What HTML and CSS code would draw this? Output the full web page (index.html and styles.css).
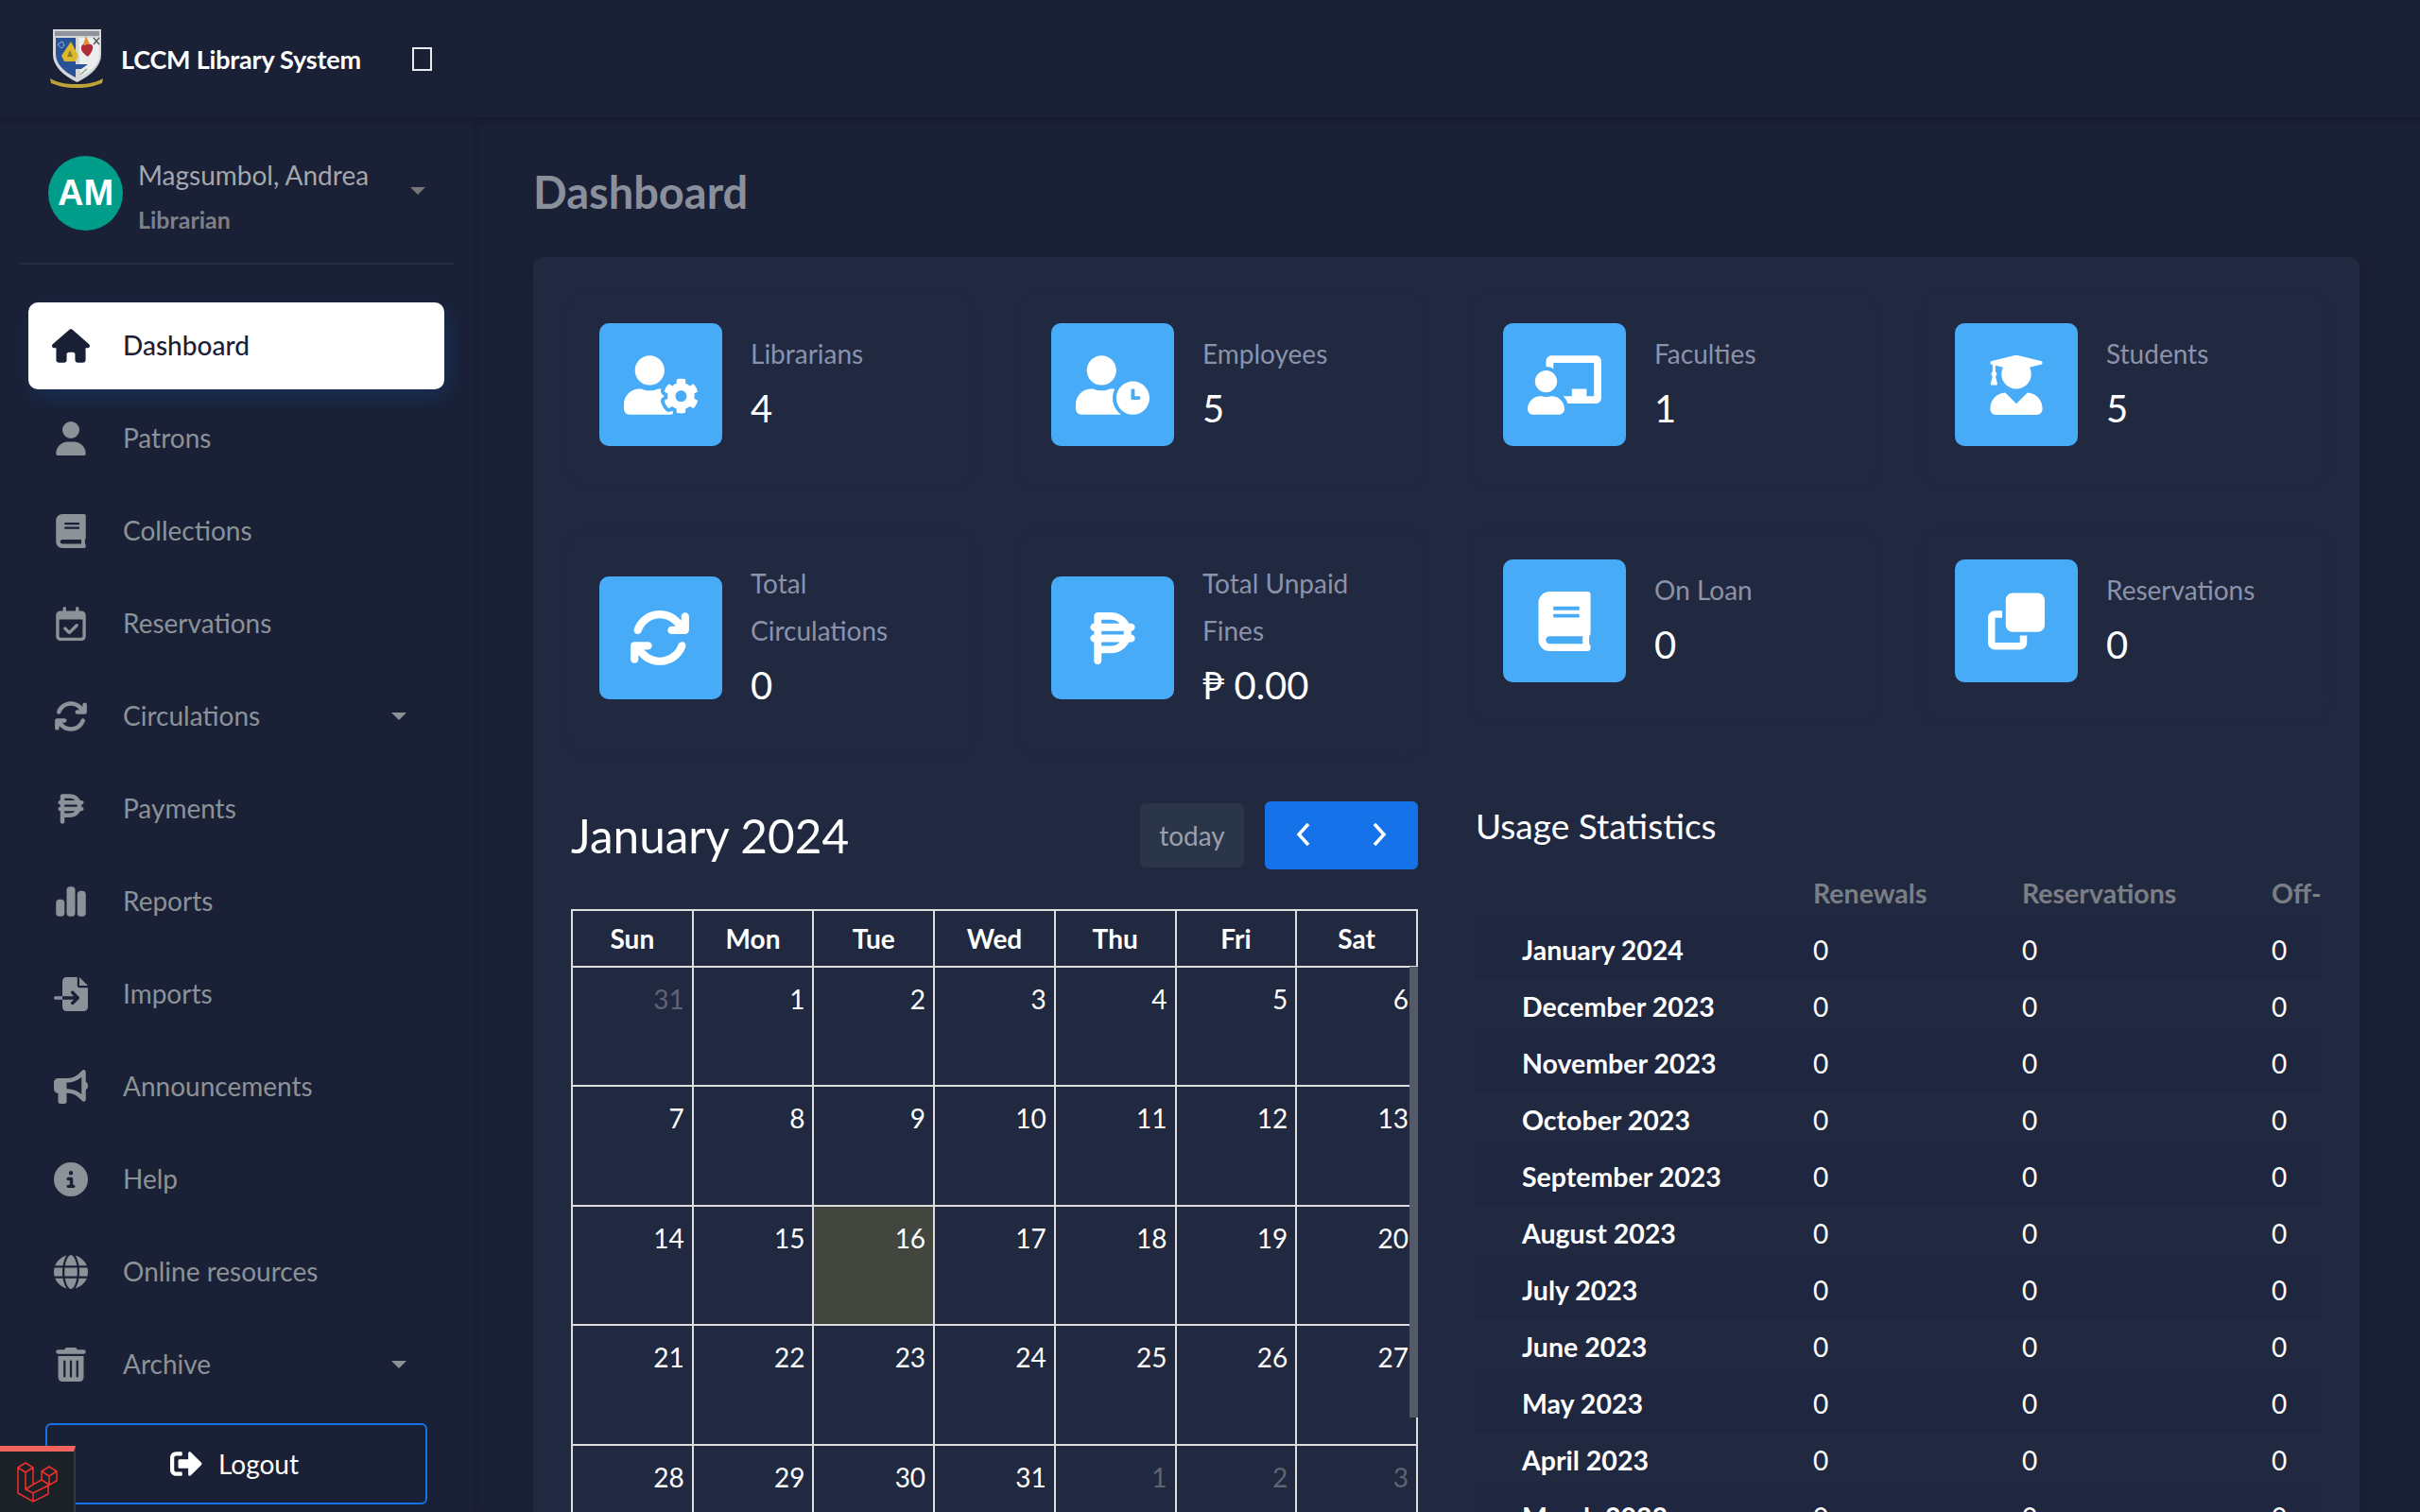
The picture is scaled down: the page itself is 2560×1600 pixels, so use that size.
FILE: index.html
```html
<!DOCTYPE html>
<html lang="en">
<head>
    <meta charset="UTF-8">
    <meta name="viewport" content="width=device-width, initial-scale=1.0">
    <title>LCCM Library System</title>
    <link rel="stylesheet" href="styles.css">
</head>
<body>

<!-- icon sprite -->
<svg class="sprite" xmlns="http://www.w3.org/2000/svg">
    <symbol id="i-home" viewBox="0 0 576 512"><path d="M575.8 255.5c0 18-15 32.1-32 32.1h-32l.7 160.2c0 2.7-.2 5.4-.5 8.1V472c0 22.1-17.9 40-40 40H456c-1.1 0-2.2 0-3.3-.1c-1.4 .1-2.8 .1-4.2 .1H416 392c-22.1 0-40-17.9-40-40V448 384c0-17.7-14.3-32-32-32H256c-17.7 0-32 14.3-32 32v64 24c0 22.1-17.9 40-40 40H160 128.1c-1.5 0-3-.1-4.5-.2c-1.2 .1-2.4 .2-3.6 .2H104c-22.1 0-40-17.9-40-40V360c0-.9 0-1.9 .1-2.8V287.6H32c-18 0-32-14-32-32.1c0-9 3-17 10-24L266.4 8c7-7 15-8 22-8s15 2 21 7L564.8 231.5c8 7 12 15 11 24z"/></symbol>
    <symbol id="i-user" viewBox="0 0 448 512"><path d="M224 256A128 128 0 1 0 224 0a128 128 0 1 0 0 256zm-45.7 48C79.8 304 0 383.8 0 482.3C0 498.7 13.3 512 29.7 512H418.3c16.4 0 29.7-13.3 29.7-29.7C448 383.8 368.2 304 269.7 304H178.3z"/></symbol>
    <symbol id="i-book" viewBox="0 0 448 512"><path d="M448 360V24c0-13.3-10.7-24-24-24H96C43 0 0 43 0 96v320c0 53 43 96 96 96h328c13.3 0 24-10.7 24-24v-16c0-7.5-3.5-14.3-8.9-18.7-4.2-15.4-4.2-59.3 0-74.7 5.4-4.3 8.9-11.1 8.9-18.6zM128 134c0-3.3 2.7-6 6-6h212c3.3 0 6 2.7 6 6v20c0 3.3-2.7 6-6 6H134c-3.3 0-6-2.7-6-6v-20zm0 64c0-3.3 2.7-6 6-6h212c3.3 0 6 2.7 6 6v20c0 3.3-2.7 6-6 6H134c-3.3 0-6-2.7-6-6v-20zm253.4 250H96c-17.7 0-32-14.3-32-32 0-17.6 14.4-32 32-32h285.4c-1.9 17.1-1.9 46.9 0 64z"/></symbol>
    <symbol id="i-calendar" viewBox="0 0 448 512"><path d="M128 0c13.3 0 24 10.7 24 24V64H296V24c0-13.3 10.7-24 24-24s24 10.7 24 24V64h40c35.3 0 64 28.7 64 64v16 48V448c0 35.3-28.7 64-64 64H64c-35.3 0-64-28.7-64-64V192 144 128C0 92.7 28.7 64 64 64h40V24c0-13.3 10.7-24 24-24zM400 192H48V448c0 8.8 7.2 16 16 16H384c8.8 0 16-7.2 16-16V192zM329 297L217 409c-9.4 9.4-24.6 9.4-33.9 0l-64-64c-9.4-9.4-9.4-24.6 0-33.9s24.6-9.4 33.9 0l47 47 95-95c9.4-9.4 24.6-9.4 33.9 0s9.4 24.6 0 33.9z"/></symbol>
    <symbol id="i-sync" viewBox="0 0 512 512"><path d="M105.1 202.6c7.7-21.8 20.2-42.3 37.8-59.8c62.5-62.5 163.8-62.5 226.3 0L386.3 160H352c-17.7 0-32 14.3-32 32s14.3 32 32 32H463.5c0 0 0 0 0 0h.4c17.7 0 32-14.3 32-32V80c0-17.7-14.3-32-32-32s-32 14.3-32 32v35.2L414.4 97.6c-87.5-87.5-229.3-87.5-316.8 0C73.2 122 55.6 150.7 44.8 181.4c-5.9 16.7 2.9 34.9 19.5 40.8s34.9-2.9 40.8-19.5zM39 289.3c-5 1.5-9.8 4.2-13.7 8.2c-4 4-6.7 8.8-8.1 14c-.3 1.2-.6 2.5-.8 3.8c-.3 1.7-.4 3.4-.4 5.1V432c0 17.7 14.3 32 32 32s32-14.3 32-32V396.9l17.6 17.5 0 0c87.5 87.4 229.3 87.4 316.7 0c24.4-24.4 42.1-53.1 52.9-83.7c5.9-16.7-2.9-34.9-19.5-40.8s-34.9 2.9-40.8 19.5c-7.7 21.8-20.2 42.3-37.8 59.8c-62.5 62.5-163.8 62.5-226.3 0l-.1-.1L125.6 352H160c17.7 0 32-14.3 32-32s-14.3-32-32-32H48.4c-1.6 0-3.2 .1-4.8 .3s-3.1 .5-4.6 1z"/></symbol>
    <symbol id="i-peso" viewBox="0 0 384 512"><path d="M64 32C46.3 32 32 46.3 32 64v64c-17.7 0-32 14.3-32 32s14.3 32 32 32l0 32c-17.7 0-32 14.3-32 32s14.3 32 32 32l0 64v96c0 17.7 14.3 32 32 32s32-14.3 32-32V384h80c68.4 0 127.7-39 156.8-96H352c17.7 0 32-14.3 32-32s-14.3-32-32-32h-.7c.5-5.3 .7-10.6 .7-16s-.2-10.7-.7-16h.7c17.7 0 32-14.3 32-32s-14.3-32-32-32H332.8C303.7 71 244.4 32 176 32H64zm190.4 96H96V96h80c30.5 0 58.2 12.2 78.4 32zM96 192H286.9c.7 5.2 1.1 10.6 1.1 16s-.4 10.8-1.1 16H96V192zm158.4 96c-20.2 19.8-47.9 32-78.4 32H96V288H254.4z"/></symbol>
    <symbol id="i-chart" viewBox="0 0 448 512"><path d="M160 80c0-26.5 21.5-48 48-48h32c26.5 0 48 21.5 48 48V432c0 26.5-21.5 48-48 48H208c-26.5 0-48-21.5-48-48V80zM0 272c0-26.5 21.5-48 48-48H80c26.5 0 48 21.5 48 48V432c0 26.5-21.5 48-48 48H48c-26.5 0-48-21.5-48-48V272zM368 96h32c26.5 0 48 21.5 48 48V432c0 26.5-21.5 48-48 48H368c-26.5 0-48-21.5-48-48V144c0-26.5 21.5-48 48-48z"/></symbol>
    <symbol id="i-import" viewBox="0 0 512 512"><path d="M128 64c0-35.3 28.7-64 64-64H352V128c0 17.7 14.3 32 32 32H512V448c0 35.3-28.7 64-64 64H192c-35.3 0-64-28.7-64-64V336H302.1l-39 39c-9.4 9.4-9.4 24.6 0 33.9s24.6 9.4 33.9 0l80-80c9.4-9.4 9.4-24.6 0-33.9l-80-80c-9.4-9.4-24.6-9.4-33.9 0s-9.4 24.6 0 33.9l39 39H128V64zm0 224v48H24c-13.3 0-24-10.7-24-24s10.7-24 24-24H128zM512 128H384V0L512 128z"/></symbol>
    <symbol id="i-bullhorn" viewBox="0 0 512 512"><path d="M480 32c0-12.9-7.8-24.6-19.8-29.6s-25.7-2.2-34.9 6.9L381.7 53c-48 48-113.1 75-181 75H192 160 64c-35.3 0-64 28.7-64 64v96c0 35.3 28.7 64 64 64l0 128c0 17.7 14.3 32 32 32h64c17.7 0 32-14.3 32-32V352h8.7c67.9 0 133 27 181 75l43.6 43.6c9.2 9.2 22.9 11.9 34.9 6.9s19.8-16.6 19.8-29.6V300.4c18.6-8.8 32-32.5 32-60.4s-13.4-51.6-32-60.4V32zm-64 76.7V240 371.3C357.2 317.8 280.5 288 200.7 288H192V192h8.7c79.8 0 156.5-29.8 215.3-83.3z"/></symbol>
    <symbol id="i-info" viewBox="0 0 512 512"><path d="M256 512A256 256 0 1 0 256 0a256 256 0 1 0 0 512zM216 336h24V272H216c-13.3 0-24-10.7-24-24s10.7-24 24-24h48c13.3 0 24 10.7 24 24v88h8c13.3 0 24 10.7 24 24s-10.7 24-24 24H216c-13.3 0-24-10.7-24-24s10.7-24 24-24zm40-208a32 32 0 1 1 0 64 32 32 0 1 1 0-64z"/></symbol>
    <symbol id="i-globe" viewBox="0 0 512 512"><path d="M352 256c0 22.2-1.2 43.6-3.3 64H163.3c-2.2-20.4-3.3-41.8-3.3-64s1.2-43.6 3.3-64H348.7c2.2 20.4 3.3 41.8 3.3 64zm28.8-64H503.9c5.3 20.5 8.1 41.9 8.1 64s-2.8 43.5-8.1 64H380.8c2.1-20.6 3.2-42 3.2-64s-1.1-43.4-3.2-64zm112.6-32H376.7c-10-63.9-29.8-117.4-55.3-151.6c78.3 20.7 142 77.5 172.9 151.6zm-149.1 0H167.7c6.1-36.4 15.5-68.6 27-94.7c10.5-23.6 22.2-40.7 33.5-51.5C239.4 3.2 248.7 0 256 0s16.6 3.2 27.8 13.8c11.3 10.8 23 27.9 33.5 51.5c11.6 26 20.9 58.2 27 94.7zm-209 0H18.6C49.6 85.9 113.2 29.1 191.6 8.4C166.1 42.6 146.3 96.1 136.3 160zM8.1 192H131.2c-2.1 20.6-3.2 42-3.2 64s1.1 43.4 3.2 64H8.1C2.8 299.5 0 278.1 0 256s2.8-43.5 8.1-64zM194.7 446.6c-11.6-26-20.9-58.2-27-94.6H344.3c-6.1 36.4-15.5 68.6-27 94.6c-10.5 23.6-22.2 40.7-33.5 51.5C272.6 508.8 263.3 512 256 512s-16.6-3.2-27.8-13.8c-11.3-10.8-23-27.9-33.5-51.5zM136.3 352c10 63.9 29.8 117.4 55.3 151.6C113.2 482.9 49.6 426.1 18.6 352H136.3zm358.1 0c-30.9 74.1-94.6 130.9-172.9 151.6c25.5-34.2 45.2-87.7 55.3-151.6H493.4z"/></symbol>
    <symbol id="i-trash" viewBox="0 0 448 512"><path d="M135.2 17.7C140.6 6.8 151.7 0 163.8 0H284.2c12.1 0 23.2 6.8 28.6 17.7L320 32h96c17.7 0 32 14.3 32 32s-14.3 32-32 32H32C14.3 96 0 81.7 0 64S14.3 32 32 32h96l7.2-14.3zM32 128H416V448c0 35.3-28.7 64-64 64H96c-35.3 0-64-28.7-64-64V128zm96 64c-8.8 0-16 7.2-16 16V432c0 8.8 7.2 16 16 16s16-7.2 16-16V208c0-8.8-7.2-16-16-16zm96 0c-8.8 0-16 7.2-16 16V432c0 8.8 7.2 16 16 16s16-7.2 16-16V208c0-8.8-7.2-16-16-16zm96 0c-8.8 0-16 7.2-16 16V432c0 8.8 7.2 16 16 16s16-7.2 16-16V208c0-8.8-7.2-16-16-16z"/></symbol>
    <symbol id="i-logout" viewBox="0 0 512 512"><path d="M497 273L329 441c-15 15-41 4.5-41-17v-96H152c-13.3 0-24-10.7-24-24v-96c0-13.3 10.7-24 24-24h136V88c0-21.4 25.9-32 41-17l168 168c9.3 9.4 9.3 24.6 0 34zM192 436v-40c0-6.6-5.4-12-12-12H96c-17.7 0-32-14.3-32-32V160c0-17.7 14.3-32 32-32h84c6.6 0 12-5.4 12-12V76c0-6.6-5.4-12-12-12H96c-53 0-96 43-96 96v192c0 53 43 96 96 96h84c6.6 0 12-5.4 12-12z"/></symbol>
    <symbol id="i-user-cog" viewBox="0 0 640 512"><path d="M610.5 373.3c2.6-14.1 2.6-28.5 0-42.6l25.8-14.9c3-1.7 4.3-5.2 3.3-8.5-6.7-21.6-18.2-41.2-33.2-57.4-2.3-2.5-6-3.1-9-1.4l-25.8 14.9c-10.9-9.3-23.4-16.5-36.9-21.3v-29.8c0-3.4-2.4-6.4-5.7-7.1-22.3-5-45-4.8-66.2 0-3.3.7-5.7 3.7-5.7 7.1v29.8c-13.5 4.8-26 12-36.9 21.3l-25.8-14.9c-2.9-1.7-6.7-1.1-9 1.4-15 16.2-26.5 35.8-33.2 57.4-1 3.3.4 6.8 3.3 8.5l25.8 14.9c-2.6 14.1-2.6 28.5 0 42.6l-25.8 14.9c-3 1.7-4.3 5.2-3.3 8.5 6.7 21.6 18.2 41.1 33.2 57.4 2.3 2.5 6 3.1 9 1.4l25.8-14.9c10.9 9.3 23.4 16.5 36.9 21.3v29.8c0 3.4 2.4 6.4 5.7 7.1 22.3 5 45 4.8 66.2 0 3.3-.7 5.7-3.7 5.7-7.1v-29.8c13.5-4.8 26-12 36.9-21.3l25.8 14.9c2.9 1.7 6.7 1.1 9-1.4 15-16.2 26.5-35.8 33.2-57.4 1-3.3-.4-6.8-3.3-8.5l-25.8-14.9zM496 400.5c-26.8 0-48.5-21.8-48.5-48.5s21.8-48.5 48.5-48.5 48.5 21.8 48.5 48.5-21.7 48.5-48.5 48.5zM224 256c70.7 0 128-57.3 128-128S294.7 0 224 0 96 57.3 96 128s57.3 128 128 128zm201.2 226.5c-2.3-1.2-4.6-2.6-6.8-3.9l-7.9 4.6c-6 3.4-12.8 5.3-19.6 5.3-10.9 0-21.4-4.6-28.9-12.6-18.3-19.8-32.3-43.9-40.2-69.6-5.5-17.7 1.9-36.4 17.9-45.7l7.9-4.6c-.1-2.6-.1-5.2 0-7.8l-7.9-4.6c-16-9.2-23.4-28-17.9-45.7.9-2.9 2.2-5.8 3.2-8.7-3.8-.3-7.5-1.2-11.4-1.2h-16.7c-22.2 10.2-46.9 16-72.9 16s-50.6-5.8-72.9-16h-16.7C60.2 288 0 348.2 0 422.4V464c0 26.5 21.5 48 48 48h352c10.1 0 19.5-3.2 27.2-8.5-1.2-3.8-2-7.7-2-11.8v-9.2z"/></symbol>
    <symbol id="i-user-clock" viewBox="0 0 640 512"><path d="M496 224c-79.6 0-144 64.4-144 144s64.4 144 144 144 144-64.4 144-144-64.4-144-144-144zm64 150.3c0 5.3-4.4 9.7-9.7 9.7h-60.6c-5.3 0-9.7-4.4-9.7-9.7v-76.6c0-5.3 4.4-9.7 9.7-9.7h12.6c5.3 0 9.7 4.4 9.7 9.7V352h38.3c5.3 0 9.7 4.4 9.7 9.7v12.6zM320 368c0-27.8 6.7-54.1 18.2-77.5-8-1.5-16.2-2.5-24.6-2.5h-16.7c-22.2 10.2-46.9 16-72.9 16s-50.6-5.8-72.9-16h-16.7C60.2 288 0 348.2 0 422.4V464c0 26.5 21.5 48 48 48h347.1c-45.3-31.9-75.1-84.5-75.1-144zm-96-112c70.7 0 128-57.3 128-128S294.7 0 224 0 96 57.3 96 128s57.3 128 128 128z"/></symbol>
    <symbol id="i-teacher" viewBox="0 0 640 512"><path d="M208 352c-2.39 0-4.78.35-7.06 1.09C187.98 357.3 174.35 360 160 360c-14.35 0-27.98-2.7-40.95-6.91-2.28-.74-4.66-1.09-7.05-1.09C49.94 352-.33 402.48 0 464.62.14 490.88 21.73 512 48 512h224c26.27 0 47.86-21.12 48-47.38.33-62.14-49.94-112.62-112-112.62zm-48-32c53.02 0 96-42.98 96-96s-42.98-96-96-96-96 42.98-96 96 42.98 96 96 96zM592 0H208c-26.47 0-48 22.25-48 49.59V96c23.42 0 45.1 6.78 64 17.8V64h352v288h-64v-64H384v64h-76.24c19.1 16.69 33.12 38.73 39.69 64H592c26.47 0 48-22.25 48-49.59V49.59C640 22.25 618.47 0 592 0z"/></symbol>
    <symbol id="i-graduate" viewBox="0 0 448 512"><path d="M319.4 320.6L224 416l-95.4-95.4C57.1 323.7 0 382.2 0 454.4v9.6c0 26.5 21.5 48 48 48h352c26.5 0 48-21.5 48-48v-9.6c0-72.2-57.1-130.7-128.6-133.8zM13.6 79.8l6.4 1.5v58.4c-7 4.2-12 11.5-12 20.3 0 8.4 4.6 15.4 11.1 19.7L3.5 242c-1.7 6.9 2.1 14 7.6 14h41.8c5.5 0 9.3-7.1 7.6-14l-15.6-62.3C51.4 175.4 56 168.4 56 160c0-8.8-5-16.1-12-20.3V87.1l66 15.9c-8.6 17.2-14 36.4-14 57 0 70.7 57.3 128 128 128s128-57.3 128-128c0-20.6-5.3-39.8-14-57l96.3-23.2c18.2-4.4 18.2-27.1 0-31.5l-190.4-46c-13-3.1-26.7-3.1-39.7 0L13.6 48.2c-18.1 4.4-18.1 27.2 0 31.6z"/></symbol>
    <symbol id="i-clone" viewBox="0 0 512 512"><path d="M0 448c0 35.3 28.7 64 64 64H288c35.3 0 64-28.7 64-64V384H288v64H64V224h64V160H64c-35.3 0-64 28.7-64 64V448zM224 352H448c35.3 0 64-28.7 64-64V64c0-35.3-28.7-64-64-64H224c-35.3 0-64 28.7-64 64V288c0 35.3 28.7 64 64 64z"/></symbol>
</svg>

<header class="topbar">
    <svg class="crest" viewBox="0 0 56 62">
        <path d="M3 0h51v27c0 12-11 22-25.500 29C14 49 3 39 3 27z" fill="#d4d6d8"/>
        <rect x="5" y="2" width="47" height="5" fill="#8f939b"/>
        <path d="M6 9h21v42C14 45 6 36 6 26z" fill="#2a5298"/>
        <path d="M30 9h22v18c0 10-9 18-20 23z" fill="#eceded"/>
        <path d="M22 13l8 15-3 6H15l-3-6z" fill="#dcb92e"/>
        <path d="M21 22l3 7h-6z" fill="#8a7a2c"/>
        <path d="M13 13l-5 3 4 4 3-3z" fill="none" stroke="#9fb0c8" stroke-width="1"/>
        <path d="M37 17c2-2 7-2 8 1s-2 8-5 11c-3-2-8-6-7-10s3-3 4-2z" fill="#b12c36"/>
        <path d="M38 7l4 9h-7z" fill="#e2912f"/>
        <path d="M46 9l6 7M52 9l-6 7" stroke="#55565a" stroke-width="1.500"/>
        <path d="M16 37h24l-7 5h-12z" fill="#2a5298"/>
        <path d="M32 48l7-6" stroke="#7fb07a" stroke-width="1.500"/>
        <path d="M0 52c8 4 14 6 28 6s20-2 28-6l-1 5c-8 3-15 5-27 5S9 60 1 57z" fill="#bda238"/>
    </svg>
    <span class="brand">LCCM Library System</span>
    <span class="tofu"></span>
</header>

<div class="layout">
    <aside class="sidebar">
        <div class="user">
            <div class="avatar">AM</div>
            <div class="user-info">
                <span class="user-name">Magsumbol, Andrea</span>
                <span class="user-role">Librarian</span>
            </div>
            <span class="caret user-caret"></span>
        </div>

        <nav class="nav">
            <a class="nav-item active"><span class="nav-icon"><svg class="ic-home"><use href="#i-home"/></svg></span><span class="nav-label">Dashboard</span></a>
            <a class="nav-item"><span class="nav-icon"><svg class="ic-s"><use href="#i-user"/></svg></span><span class="nav-label">Patrons</span></a>
            <a class="nav-item"><span class="nav-icon"><svg class="ic-s"><use href="#i-book"/></svg></span><span class="nav-label">Collections</span></a>
            <a class="nav-item"><span class="nav-icon"><svg class="ic-s"><use href="#i-calendar"/></svg></span><span class="nav-label">Reservations</span></a>
            <a class="nav-item"><span class="nav-icon"><svg class="ic-w"><use href="#i-sync"/></svg></span><span class="nav-label">Circulations</span><span class="caret"></span></a>
            <a class="nav-item"><span class="nav-icon"><svg class="ic-s"><use href="#i-peso"/></svg></span><span class="nav-label">Payments</span></a>
            <a class="nav-item"><span class="nav-icon"><svg class="ic-s"><use href="#i-chart"/></svg></span><span class="nav-label">Reports</span></a>
            <a class="nav-item"><span class="nav-icon"><svg class="ic-w"><use href="#i-import"/></svg></span><span class="nav-label">Imports</span></a>
            <a class="nav-item"><span class="nav-icon"><svg class="ic-w"><use href="#i-bullhorn"/></svg></span><span class="nav-label">Announcements</span></a>
            <a class="nav-item"><span class="nav-icon"><svg class="ic-w"><use href="#i-info"/></svg></span><span class="nav-label">Help</span></a>
            <a class="nav-item"><span class="nav-icon"><svg class="ic-w"><use href="#i-globe"/></svg></span><span class="nav-label">Online resources</span></a>
            <a class="nav-item"><span class="nav-icon"><svg class="ic-s"><use href="#i-trash"/></svg></span><span class="nav-label">Archive</span><span class="caret"></span></a>
        </nav>

        <a class="logout"><svg class="ic-logout"><use href="#i-logout"/></svg>Logout</a>
    </aside>

    <main class="content">
        <h1 class="page-title">Dashboard</h1>

        <section class="panel">
            <div class="stats">
                <div class="stat">
                    <div class="stat-icon"><svg class="si-wide"><use href="#i-user-cog"/></svg></div>
                    <div class="stat-text"><p class="stat-label">Librarians</p><p class="stat-value">4</p></div>
                </div>
                <div class="stat">
                    <div class="stat-icon"><svg class="si-wide"><use href="#i-user-clock"/></svg></div>
                    <div class="stat-text"><p class="stat-label">Employees</p><p class="stat-value">5</p></div>
                </div>
                <div class="stat">
                    <div class="stat-icon"><svg class="si-wide"><use href="#i-teacher"/></svg></div>
                    <div class="stat-text"><p class="stat-label">Faculties</p><p class="stat-value">1</p></div>
                </div>
                <div class="stat">
                    <div class="stat-icon"><svg class="si-tall"><use href="#i-graduate"/></svg></div>
                    <div class="stat-text"><p class="stat-label">Students</p><p class="stat-value">5</p></div>
                </div>
                <div class="stat">
                    <div class="stat-icon"><svg class="si-sync"><use href="#i-sync"/></svg></div>
                    <div class="stat-text"><p class="stat-label">Total Circulations</p><p class="stat-value">0</p></div>
                </div>
                <div class="stat">
                    <div class="stat-icon"><svg class="si-tall"><use href="#i-peso"/></svg></div>
                    <div class="stat-text"><p class="stat-label">Total Unpaid Fines</p><p class="stat-value">₱ 0.00</p></div>
                </div>
                <div class="stat">
                    <div class="stat-icon"><svg class="si-tall"><use href="#i-book"/></svg></div>
                    <div class="stat-text"><p class="stat-label">On Loan</p><p class="stat-value">0</p></div>
                </div>
                <div class="stat">
                    <div class="stat-icon"><svg class="si-tall"><use href="#i-clone"/></svg></div>
                    <div class="stat-text"><p class="stat-label">Reservations</p><p class="stat-value">0</p></div>
                </div>
            </div>

            <div class="lower">
                <div class="calendar">
                    <div class="cal-toolbar">
                        <h2 class="cal-title">January 2024</h2>
                        <button class="btn-today">today</button>
                        <div class="btn-group">
                            <button class="btn-nav"><svg viewBox="0 0 16 26"><path d="M13 2L3 13l10 11"/></svg></button>
                            <button class="btn-nav"><svg viewBox="0 0 16 26"><path d="M3 2l10 11L3 24"/></svg></button>
                        </div>
                    </div>
                    <div class="cal-grid-wrap">
                        <table class="cal-grid">
                            <thead>
                                <tr><th>Sun</th><th>Mon</th><th>Tue</th><th>Wed</th><th>Thu</th><th>Fri</th><th>Sat</th></tr>
                            </thead>
                            <tbody>
                                <tr><td class="other">31</td><td>1</td><td>2</td><td>3</td><td>4</td><td>5</td><td>6</td></tr>
                                <tr><td>7</td><td>8</td><td>9</td><td>10</td><td>11</td><td>12</td><td>13</td></tr>
                                <tr><td>14</td><td>15</td><td class="today">16</td><td>17</td><td>18</td><td>19</td><td>20</td></tr>
                                <tr><td>21</td><td>22</td><td>23</td><td>24</td><td>25</td><td>26</td><td>27</td></tr>
                                <tr><td>28</td><td>29</td><td>30</td><td>31</td><td class="other">1</td><td class="other">2</td><td class="other">3</td></tr>
                            </tbody>
                        </table>
                        <div class="cal-scroll"></div>
                    </div>
                </div>

                <div class="usage">
                    <h3 class="usage-title">Usage Statistics</h3>
                    <div class="usage-wrap">
                        <table class="usage-table">
                            <thead>
                                <tr><th></th><th>Renewals</th><th>Reservations</th><th>Off-Site</th></tr>
                            </thead>
                            <tbody>
                                <tr><th>January 2024</th><td>0</td><td>0</td><td>0</td></tr>
                                <tr><th>December 2023</th><td>0</td><td>0</td><td>0</td></tr>
                                <tr><th>November 2023</th><td>0</td><td>0</td><td>0</td></tr>
                                <tr><th>October 2023</th><td>0</td><td>0</td><td>0</td></tr>
                                <tr><th>September 2023</th><td>0</td><td>0</td><td>0</td></tr>
                                <tr><th>August 2023</th><td>0</td><td>0</td><td>0</td></tr>
                                <tr><th>July 2023</th><td>0</td><td>0</td><td>0</td></tr>
                                <tr><th>June 2023</th><td>0</td><td>0</td><td>0</td></tr>
                                <tr><th>May 2023</th><td>0</td><td>0</td><td>0</td></tr>
                                <tr><th>April 2023</th><td>0</td><td>0</td><td>0</td></tr>
                                <tr><th>March 2023</th><td>0</td><td>0</td><td>0</td></tr>
                            </tbody>
                        </table>
                    </div>
                </div>
            </div>
        </section>
    </main>
</div>

<!-- debug bar tab -->
<div class="debugbar">
    <svg viewBox="0 0 43 43"><path d="M1 6l8-5 8 5v18l9-5v-9l8-5 8 5v10l-9 5v9l-16 8-16-9zM1 6l8 5 8-5M9 11v18l8 4 16-8M17 33v9M9 29l8-5M26 10l8 5 8-5M34 15v9M26 19l8 5"/></svg>
</div>

</body>
</html>
```

FILE: styles.css
```css
* {
    box-sizing: border-box;
}
html, body {
    margin: 0;
    height: 1600px;
    overflow: hidden;
}
body {
    background-color: #1a2035;
    color: #fff;
    font-family: Lato, "Noto Sans", sans-serif;
    font-size: 28px;
}
p, h1, h2, h3 {
    margin: 0;
}
.sprite {
    display: none;
}
svg {
    fill: currentColor;
}

/* top bar */
.topbar {
    display: flex;
    align-items: center;
    height: 124px;
    padding-left: 53px;
    box-shadow: 0 2px 6px rgba(15, 19, 34, 0.5);
    position: relative;
}
.crest {
    width: 56px;
    height: 62px;
    filter: blur(0.5px);
}
.brand {
    margin-left: 19px;
    font-size: 27px;
    font-weight: 700;
    letter-spacing: -0.2px;
}
.tofu {
    width: 21px;
    height: 25px;
    margin-left: 54px;
    border: 2px solid #e9edf2;
}

.layout {
    display: flex;
    height: 1476px;
}

/* sidebar */
.sidebar {
    width: 500px;
    flex: none;
    box-shadow: 2px 0 6px rgba(15, 19, 34, 0.12);
}
.user {
    display: flex;
    height: 156px;
    margin: 0 20px;
    padding: 41px 30px 0 31px;
    border-bottom: 2px solid #252b42;
}
.avatar {
    width: 79px;
    height: 79px;
    flex: none;
    border-radius: 50%;
    background-color: #009d8b;
    font-family: "Liberation Sans", Arial, sans-serif;
    font-size: 38px;
    font-weight: 700;
    line-height: 79px;
    text-align: center;
}
.user-info {
    display: flex;
    flex-direction: column;
    margin-left: 16px;
}
.user-name {
    color: #a4a7ad;
    line-height: 40px;
}
.user-role {
    margin-top: 7px;
    color: #7c8087;
    font-size: 25px;
    font-weight: 700;
    line-height: 40px;
}
.caret {
    width: 0;
    height: 0;
    margin-left: auto;
    border-top: 8px solid #8b9198;
    border-left: 8px solid transparent;
    border-right: 8px solid transparent;
}
.user-caret {
    margin-top: 33px;
    border-top-color: #777;
}
.nav {
    display: flex;
    flex-direction: column;
    gap: 6px;
    margin: 40px 30px 0;
}
.nav-item {
    display: flex;
    align-items: center;
    height: 92px;
    padding-right: 40px;
    border-radius: 10px;
    color: #8b9298;
}
.nav-item.active {
    background-color: #fff;
    color: #1a2035;
    font-weight: 500;
    box-shadow: 4px 8px 24px rgba(21, 114, 232, 0.2);
}
.nav-icon {
    display: flex;
    justify-content: center;
    align-items: center;
    width: 90px;
    margin-right: 10px;
}
.nav-label {
    margin-bottom: 3px;
}
.ic-home {
    width: 40px;
    height: 36px;
}
.ic-s {
    width: 32px;
    height: 36px;
}
.ic-w {
    width: 36px;
    height: 36px;
}
.logout {
    display: flex;
    justify-content: center;
    align-items: center;
    height: 86px;
    margin: 16px 48px 0;
    padding-right: 4px;
    border: 2px solid #1572e8;
    border-radius: 6px;
}
.ic-logout {
    width: 34px;
    height: 34px;
    margin-right: 17px;
}

/* main */
.content {
    flex: 1;
    padding: 0 64px;
}
.page-title {
    padding-top: 51px;
    margin-bottom: 41px;
    color: #8a8f9c;
    font-size: 47px;
    font-weight: 700;
    line-height: 56px;
}
.panel {
    padding: 40px 10px 0;
    border-radius: 10px;
    background-color: #202940;
    box-shadow: 2px 6px 15px rgba(15, 19, 34, 0.15);
    height: 1400px;
}

/* stats */
.stats {
    display: grid;
    grid-template-columns: repeat(4, 478px);
    align-items: start;
    row-gap: 60px;
}
.stat {
    display: flex;
    align-items: center;
    margin: 0 30px;
    padding: 30px;
    border-radius: 10px;
    box-shadow: 2px 6px 15px rgba(69, 65, 78, 0.06);
}
.stat-icon {
    display: flex;
    justify-content: center;
    align-items: center;
    width: 130px;
    height: 130px;
    flex: none;
    border-radius: 10px;
    background-color: #48abf7;
}
.si-wide {
    width: 78px;
    height: 63px;
}
.si-tall {
    width: 60px;
    height: 63px;
}
.si-sync {
    width: 66px;
    height: 66px;
    margin-right: 2px;
}
.stat-text {
    margin-left: 30px;
}
.stat-label {
    color: #8b92a9;
    line-height: 50px;
}
.stat-value {
    font-size: 40px;
    line-height: 66px;
}

/* calendar */
.lower {
    display: flex;
    gap: 61px;
    margin-top: 60px;
    padding-left: 30px;
}
.calendar {
    width: 896px;
    flex: none;
}
.cal-toolbar {
    display: flex;
    align-items: center;
    height: 72px;
    margin-bottom: 42px;
}
.cal-title {
    margin-right: auto;
    font-size: 49.5px;
    font-weight: 400;
}
.btn-today {
    width: 110px;
    height: 68px;
    border: none;
    border-radius: 6px;
    background-color: #2a3549;
    color: #9ba0a9;
    font: inherit;
}
.btn-group {
    display: flex;
    width: 162px;
    height: 72px;
    margin-left: 22px;
    border-radius: 6px;
    background-color: #1572e8;
}
.btn-nav {
    flex: 1;
    border: none;
    background: none;
}
.btn-nav:last-child svg {
    margin-right: 2px;
}
.btn-nav svg {
    width: 16px;
    height: 26px;
    fill: none;
    stroke: #fff;
    stroke-width: 3.5;
}
.cal-grid-wrap {
    position: relative;
}
.cal-grid {
    width: 896px;
    border-collapse: collapse;
    table-layout: fixed;
}
.cal-grid th, .cal-grid td {
    border: 2px solid #ddd;
}
.cal-grid th {
    height: 60px;
    font-weight: 700;
}
.cal-grid td {
    height: 126.4px;
    padding: 15px 8px 0 0;
    line-height: 36px;
    text-align: right;
    vertical-align: top;
}
.cal-grid .other {
    color: #5e6472;
}
.cal-grid .today {
    background-color: #43463e;
}
.cal-scroll {
    position: absolute;
    top: 61px;
    right: 0;
    width: 9px;
    height: 477px;
    background-color: #555a68;
}

/* usage statistics */
.usage {
    width: 894px;
    flex: none;
}
.usage-title {
    padding-top: 3px;
    font-size: 37px;
    font-weight: 400;
    line-height: 46px;
}
.usage-wrap {
    width: 894px;
    margin-top: 18px;
    overflow: hidden;
}
.usage-table {
    width: 1000px;
    border-collapse: collapse;
    table-layout: fixed;
}
.usage-table th, .usage-table td {
    height: 60px;
    padding: 0;
    text-align: left;
    white-space: nowrap;
}
.usage-table th {
    font-size: 28.5px;
}
.usage-table th:nth-child(1) {
    width: 357px;
    padding-left: 49px;
}
.usage-table th:nth-child(2) {
    width: 221px;
}
.usage-table th:nth-child(3) {
    width: 264px;
}
.usage-table thead th {
    color: #7b7e85;
}
.usage-table tbody tr:nth-child(odd) {
    background-color: #1f2740;
}

/* debug bar tab */
.debugbar {
    position: absolute;
    left: 0;
    top: 1530px;
    display: flex;
    justify-content: center;
    align-items: center;
    width: 80px;
    height: 70px;
    border-top: 6px solid #f4645f;
    border-right: 2px solid #2f3742;
    background-color: #1c2128;
}
.debugbar svg {
    width: 43px;
    height: 43px;
    fill: none;
    stroke: #f0302a;
    stroke-width: 1.5;
}
```
